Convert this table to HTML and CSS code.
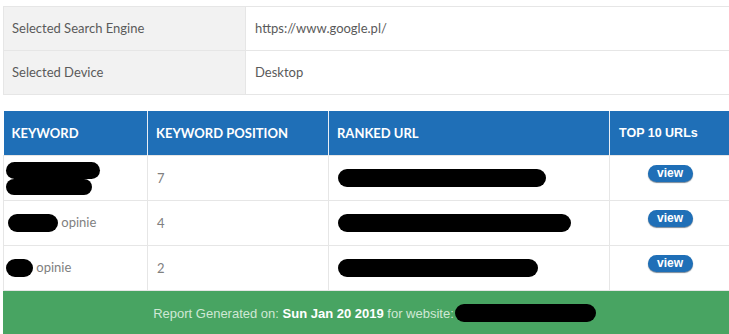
FILE: index.html
```html
<!DOCTYPE html>
<html>
<head>
<meta charset="utf-8">
<link rel="stylesheet" href="styles.css">
</head>
<body>
<div class="page">
  <table class="info">
    <tr><td class="label">Selected Search Engine</td><td class="value">https://www.google.pl/</td></tr>
    <tr><td class="label">Selected Device</td><td class="value">Desktop</td></tr>
  </table>
  <table class="report">
    <colgroup>
      <col class="c1"><col class="c2"><col class="c3"><col class="c4">
    </colgroup>
    <thead>
      <tr><th>KEYWORD</th><th>KEYWORD POSITION</th><th>RANKED URL</th><th class="top">TOP 10 URLs</th></tr>
    </thead>
    <tbody>
      <tr>
        <td class="kw"><span class="stack"><span class="blob b1a"></span><span class="blob b1b"></span></span></td>
        <td class="num">7</td>
        <td><span class="blob u1"></span></td>
        <td class="center"><span class="btn">view</span></td>
      </tr>
      <tr>
        <td class="kw"><span class="blob b2"></span> opinie</td>
        <td class="num">4</td>
        <td><span class="blob u2"></span></td>
        <td class="center"><span class="btn">view</span></td>
      </tr>
      <tr>
        <td class="kw"><span class="blob b3"></span> opinie</td>
        <td class="num">2</td>
        <td><span class="blob u3"></span></td>
        <td class="center"><span class="btn">view</span></td>
      </tr>
    </tbody>
  </table>
  <div class="footer">Report Generated on: <b>Sun Jan 20 2019</b> for website:<span class="blob fb"></span></div>
</div>
</body>
</html>
```
FILE: styles.css
```css
html, body { margin: 0; padding: 0; background: #fff; overflow: hidden; }
.page { padding: 6px 0 0 3px; width: 727px; }
table { border-collapse: collapse; width: 727px; table-layout: fixed; }
.info td {
  height: 41px; border: 1px solid #e6e6e6; padding: 0 8px 2px;
  font-family: Lato, "Noto Sans", sans-serif; font-size: 13px; color: #5a5a5a;
}
.info td.label { width: 225px; background: #f2f2f2; }
.info td.value { padding-left: 9px; }
.report { margin-top: 16px; }
.c1 { width: 144px; } .c2 { width: 181px; } .c3 { width: 281px; } .c4 { width: 121px; }
.report th {
  background: #1f6fb7; color: #fff; height: 44px; text-align: left; padding: 0 8px;
  font-family: Lato, "Noto Sans", sans-serif; font-weight: 700; font-size: 13px;
  border-left: 1px solid #e8eef5;
}
.report th:first-child { border-left: none; }
.report th.top { font-family: "Liberation Sans", Arial, sans-serif; font-size: 12.5px; padding-left: 9px; }
.report td {
  height: 44px; border: 1px solid #e6e6e6; padding: 0 9px;
  font-family: Lato, "Noto Sans", sans-serif; font-size: 13px; color: #808080;
}
.report td.kw { padding: 0 2px; }
.center { text-align: center; }
.blob { display: inline-block; background: #000; border-radius: 9px; vertical-align: middle; }
.stack { display: flex; flex-direction: column; }
.b1a { width: 94px; height: 17px; }
.b1b { width: 86px; height: 16px; }
.b2 { width: 50px; height: 18px; margin-left: 2px; }
.b3 { width: 27px; height: 18px; }
.u1 { width: 208px; height: 18px; }
.u2 { width: 233px; height: 18px; }
.u3 { width: 200px; height: 18px; }
.btn {
  display: inline-block; background: #1f6fb7; color: #fff; border-radius: 9px;
  width: 45px; height: 17px; line-height: 16px; text-align: center;
  font-family: "Liberation Sans", Arial, sans-serif; font-weight: 700; font-size: 12px;
  box-shadow: 0 1px 1px #7a8a99; position: relative; top: -5px;
}
.footer {
  background: #48a462; height: 44px; display: flex; align-items: center; justify-content: center;
  font-family: "Liberation Sans", Arial, sans-serif; font-size: 13px; color: #cfe8d5;
  padding-left: 16px; white-space: pre;
}
.footer b { color: #fff; }
.fb { width: 141px; height: 18px; margin-left: 1px; }
```
